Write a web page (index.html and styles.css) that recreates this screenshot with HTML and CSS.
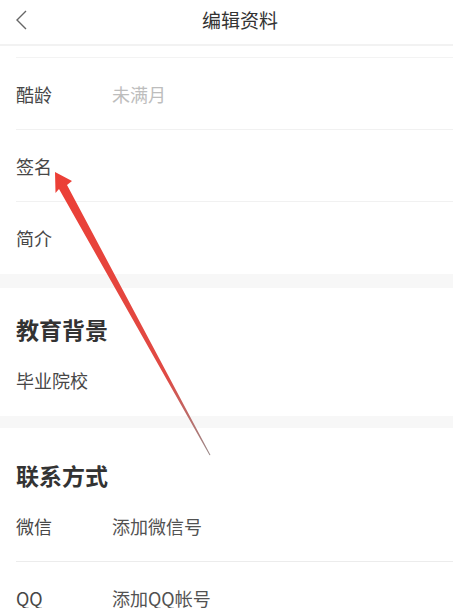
FILE: index.html
```html
<!DOCTYPE html>
<html lang="zh-CN">
<head>
<meta charset="utf-8">
<title>编辑资料</title>
<link rel="stylesheet" href="styles.css">
</head>
<body>
<div class="screen">
  <header class="topbar">
    <span class="back">
      <svg width="14" height="22" viewBox="0 0 14 22"><polyline points="11,2 2,11 11,20" fill="none" stroke="#666" stroke-width="1.4"/></svg>
    </span>
    <h1 class="title">编辑资料</h1>
  </header>
  <div class="divider"></div>
  <section class="group">
    <div class="row"><span class="label">酷龄</span><span class="value muted">未满月</span></div>
    <div class="row"><span class="label">签名</span></div>
    <div class="row last"><span class="label">简介</span></div>
  </section>
  <div class="band"></div>
  <section class="group">
    <h2 class="heading">教育背景</h2>
    <div class="row last"><span class="label">毕业院校</span></div>
  </section>
  <div class="band band-sm"></div>
  <section class="group">
    <h2 class="heading heading-b">联系方式</h2>
    <div class="row sep"><span class="label">微信</span><span class="value">添加微信号</span></div>
    <div class="row last"><span class="label">QQ</span><span class="value">添加QQ帐号</span></div>
  </section>
  <svg class="arrow" width="453" height="608" viewBox="0 0 453 608">
    <defs>
      <linearGradient id="ag" x1="55" y1="172" x2="210" y2="455" gradientUnits="userSpaceOnUse">
        <stop offset="0" stop-color="#ec3f36"/>
        <stop offset="0.72" stop-color="#e04a44"/>
        <stop offset="1" stop-color="#9a8a8a"/>
      </linearGradient>
    </defs>
    <polygon points="55,172 72,181 67,185 210.5,455 209.5,455.3 59,189 55.5,193" fill="url(#ag)"/>
  </svg>
</div>
</body>
</html>
```
FILE: styles.css
```css
html, body {
  margin: 0;
  padding: 0;
  background: #ffffff;
}
body {
  font-family: "Noto Sans CJK SC", "Noto Sans", sans-serif;
  color: #444;
}
.screen {
  position: relative;
  width: 453px;
  height: 608px;
  overflow: hidden;
}
.topbar {
  height: 44px;
  display: flex;
  align-items: center;
  border-bottom: 2px solid #f2f2f2;
  position: relative;
}
.back {
  display: flex;
  padding-left: 15px;
  width: 14px;
  height: 22px;
  margin-top: -4px;
}
.title {
  flex: 1;
  margin: 0;
  text-align: center;
  font-size: 19px;
  font-weight: 400;
  color: #333;
  line-height: 24px;
  padding-right: 2px;
  margin-top: -4px;
}
.divider {
  margin-top: 11px;
  margin-left: 16px;
  height: 1px;
  background: #f3f3f3;
}
.group {
  padding-left: 16px;
}
.row {
  box-sizing: border-box;
  height: 72px;
  display: flex;
  align-items: center;
  padding-top: 0;
  border-bottom: 1px solid #f1f1f1;
  font-size: 18px;
  line-height: 24px;
}
.row.last {
  border-bottom: none;
}
.row.sep {
  border-bottom: 1px solid #ececec;
}
.label {
  width: 96px;
  color: #474747;
}
.value {
  color: #525252;
}
.value.muted {
  color: #bdbdbd;
}
.band {
  height: 14px;
  background: #f7f7f7;
}
.band-sm {
  height: 12px;
}
.heading {
  margin: 26px 0 0;
  font-size: 23px;
  font-weight: 700;
  line-height: 30px;
  color: #333;
}
.heading-b {
  margin-top: 32px;
}
.group .heading + .row {
  height: 72px;
  padding-top: 0;
}
.arrow {
  position: absolute;
  left: 0;
  top: 0;
  pointer-events: none;
}
```
